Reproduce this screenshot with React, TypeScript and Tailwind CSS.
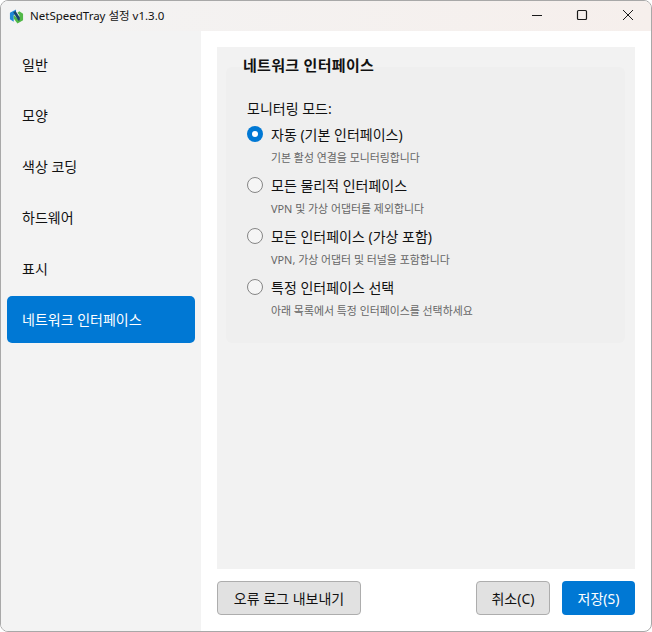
const FONT = "font-['Noto_Sans','Noto_Sans_CJK_KR',sans-serif]";

const nav = ['일반', '모양', '색상 코딩', '하드웨어', '표시', '네트워크 인터페이스'];
const options = [
  { label: '자동 (기본 인터페이스)', desc: '기본 활성 연결을 모니터링합니다', on: true },
  { label: '모든 물리적 인터페이스', desc: 'VPN 및 가상 어댑터를 제외합니다', on: false },
  { label: '모든 인터페이스 (가상 포함)', desc: 'VPN, 가상 어댑터 및 터널을 포함합니다', on: false },
  { label: '특정 인터페이스 선택', desc: '아래 목록에서 특정 인터페이스를 선택하세요', on: false },
];

function Logo() {
  return (
    <svg width="15" height="15" viewBox="0 0 16 16">
      <path d="M7.5 0.5 L1 4 V11 L5 13.5 V6.5 L7.5 5 Z" fill="#1e88d6" />
      <path d="M5 6 L11 12 V6.5 L9 4 L11 2.5 L15 5 V12 L9 15.5 L5 10 Z" fill="#52b848" />
      <path d="M4.5 3.5 L7 2 L11.5 9 V12 L10 12.5 Z" fill="#17456e" />
    </svg>
  );
}

function Radio({ on }: { on: boolean }) {
  return on ? (
    <span className="flex h-4 w-4 shrink-0 items-center justify-center rounded-full bg-[#0078d4]">
      <span className="h-1.5 w-1.5 rounded-full bg-white" />
    </span>
  ) : (
    <span className="h-4 w-4 shrink-0 rounded-full border-[1.5px] border-[#858585] bg-[#f5f5f5]" />
  );
}

export default function App() {
  return (
    <div className={`${FONT} h-[632px] w-[652px] overflow-hidden rounded-[8px] border border-[#a8a8a8] bg-white text-[#111111]`}>
      <div className="flex h-[30px] items-center bg-gradient-to-r from-[#f3f3f3] to-[#f6efec]">
        <div className="ml-[8px] flex items-center gap-[6px]">
          <Logo />
          <span className="text-[11.5px] leading-none">NetSpeedTray 설정 v1.3.0</span>
        </div>
        <div className="ml-auto flex items-center">
          <svg width="152" height="30" viewBox="0 0 152 30" fill="none" stroke="#1a1a1a" strokeWidth="1">
            <path d="M33 14.5 H43" />
            <rect x="78.5" y="9.5" width="9" height="9" rx="1" strokeWidth="1.2" />
            <path d="M124 9 L134 19 M134 9 L124 19" />
          </svg>
        </div>
      </div>
      <div className="flex h-[600px]">
        <div className="flex w-[200px] shrink-0 flex-col gap-[4px] bg-[#f3f3f3] px-[6px] pt-[10px]">
          {nav.map((n, i) => {
            const active = i === nav.length - 1;
            return (
              <div
                key={n}
                className={`flex h-[47px] items-center rounded-[5px] pl-[15px] text-[14px] ${active ? 'bg-[#0078d4] text-white' : 'text-[#111111]'}`}
              >
                {n}
              </div>
            );
          })}
        </div>
        <div className="flex flex-1 flex-col px-[16px] pt-[16px]">
          <div className="h-[522px] bg-[#f2f2f2] pl-[9px] pr-[10px]">
            <div className="relative pl-[17px] pt-[8px] text-[15px] font-bold leading-[20px] tracking-[0.3px]">네트워크 인터페이스</div>
            <div className="-mt-[8px] h-[276px] rounded-[6px] bg-[#efefef] pl-[21px] pt-[32px]">
              <div className="text-[14px] leading-[20px]">모니터링 모드:</div>
              <div className="mt-[4px] flex flex-col gap-[9px]">
                {options.map((o) => (
                  <div key={o.label}>
                    <div className="flex h-[22px] items-center gap-[8px]">
                      <Radio on={o.on} />
                      <span className="pt-[1px] text-[14px] leading-[20px]">{o.label}</span>
                    </div>
                    <div className="ml-[24px] mt-[6px] text-[10.9px] leading-[14px] text-[#666666]">{o.desc}</div>
                  </div>
                ))}
              </div>
            </div>
          </div>
          <div className="mt-[12px] flex items-center">
            <button className="h-[34px] w-[144px] rounded-[4px] border border-[#adadad] bg-[#e1e1e1] text-[14px] text-[#111111]">오류 로그 내보내기</button>
            <button className="ml-auto h-[34px] w-[74px] rounded-[4px] border border-[#adadad] bg-[#e1e1e1] text-[14px] text-[#111111]">취소(C)</button>
            <button className="ml-[12px] h-[34px] w-[73px] rounded-[4px] bg-[#0078d4] text-[14px] text-white">저장(S)</button>
          </div>
        </div>
      </div>
    </div>
  );
}
